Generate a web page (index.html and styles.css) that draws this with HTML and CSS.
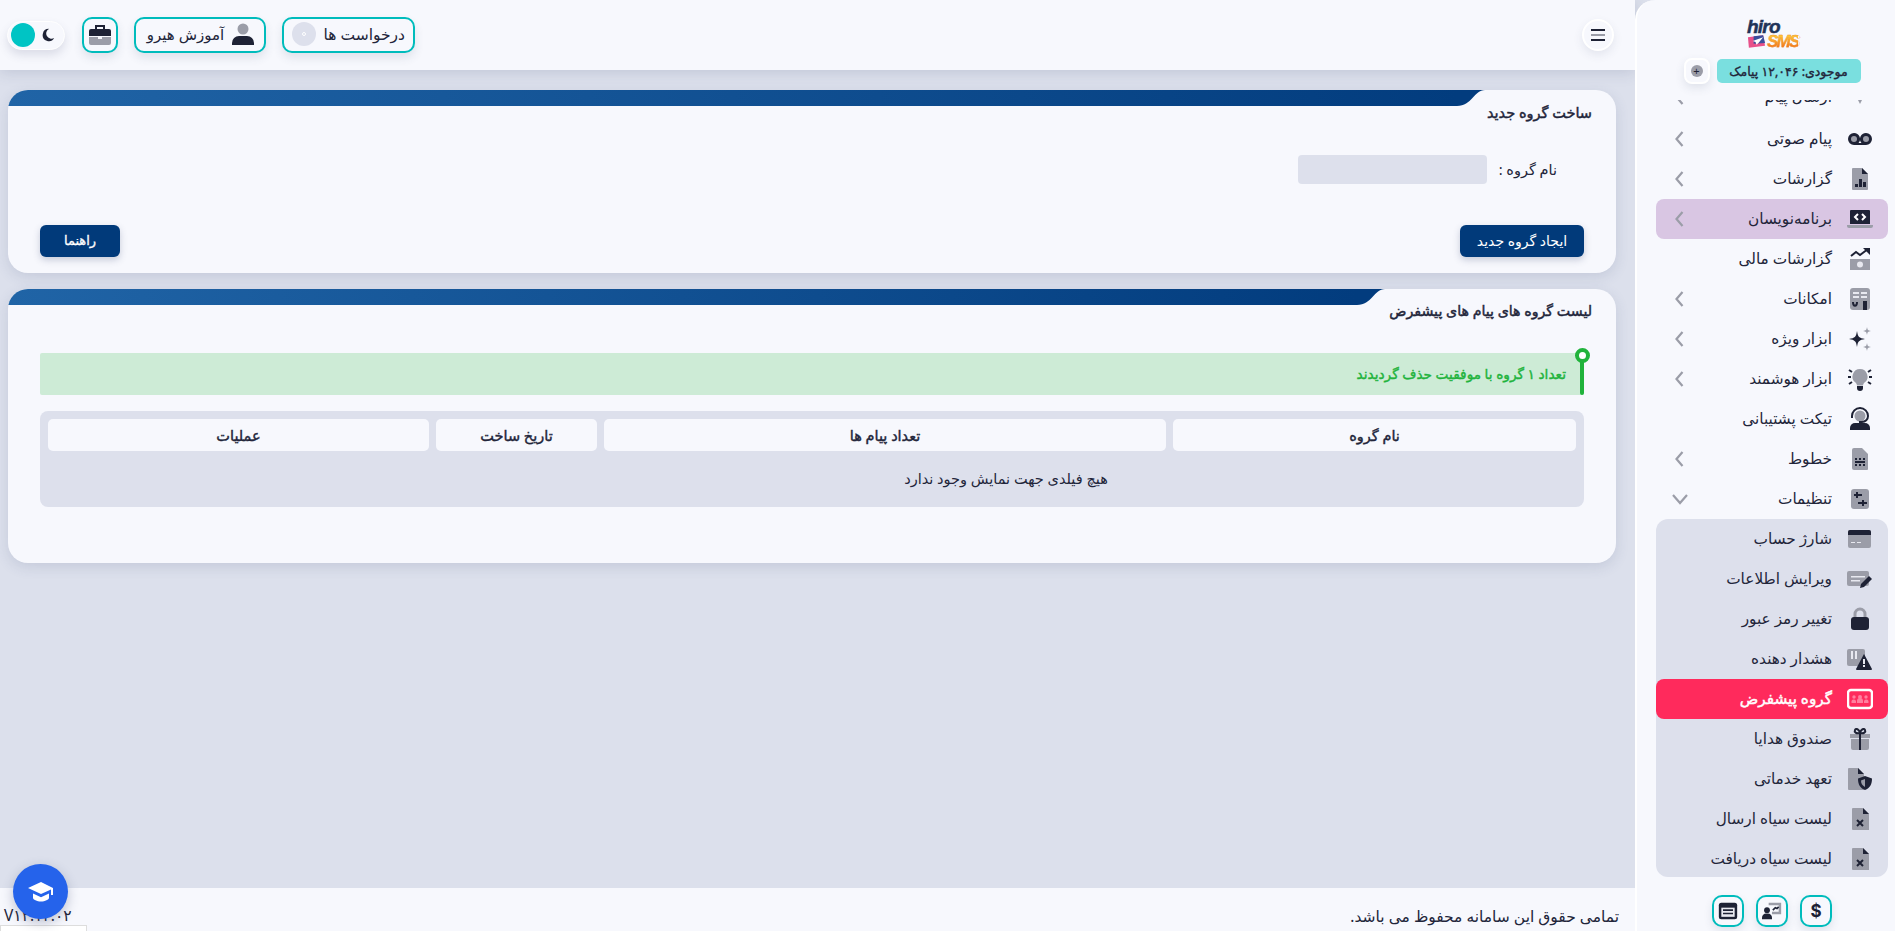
FILE: index.html
```html
<!DOCTYPE html>
<html lang="fa" dir="rtl">
<head>
<meta charset="utf-8">
<title>گروه پیشفرض</title>
<link rel="stylesheet" href="styles.css">
</head>
<body>
<aside class="sidebar">
  <div class="brand">
    <div class="logo" dir="ltr">
      <span class="logo-hiro">hiro</span>
      <div class="logo-row">
        <svg class="logo-plane" viewBox="0 0 20 14"><path fill="#e8508a" d="M1 3l16-2 2 11-17 2z"/><path fill="#3a4f9c" d="M7 2l10-1 2 8-12 1z"/><path fill="#fff" d="M17 3L6 7l3 1 1 3 2-2z"/></svg>
        <span class="logo-sms">SMS</span>
      </div>
    </div>
    <div class="balance-row">
      <span class="balance">موجودی: ۱۲,۰۴۶ پیامک</span>
      <button class="plus-btn"><span class="plus-dot">+</span></button>
    </div>
  </div>
  <nav class="nav">
    <a class="nav-item nav-first"><svg class="ico" viewBox="0 0 24 24"><path class="g" d="M2 2h20v13H14l-2 4-2-4H2z"/></svg><span>ارسال پیام</span><svg class="chev" viewBox="0 0 12 20"><path d="M9 3L3 10l6 7"/></svg></a>
    <a class="nav-item"><svg class="ico" viewBox="0 0 26 24"><path class="d" d="M7 6a6 6 0 0 0 0 12h12a6 6 0 0 0 0-12 6 6 0 0 0-4.500 10h-3A6 6 0 0 0 7 6z"/><circle class="g" cx="7" cy="12" r="3"/><circle class="g" cx="19" cy="12" r="3"/></svg><span>پیام صوتی</span><svg class="chev" viewBox="0 0 12 20"><path d="M9 3L3 10l6 7"/></svg></a>
    <a class="nav-item"><svg class="ico" viewBox="0 0 24 24"><path class="g" d="M5 1h9l6 6v15a1 1 0 0 1-1 1H5a1 1 0 0 1-1-1V2a1 1 0 0 1 1-1z"/><path class="d" d="M14 1l6 6h-6zM7 17h3v3H7zM11 12h3v8h-3zM15 15h3v5h-3z"/></svg><span>گزارشات</span><svg class="chev" viewBox="0 0 12 20"><path d="M9 3L3 10l6 7"/></svg></a>
    <a class="nav-item nav-dev"><svg class="ico" viewBox="0 0 26 24"><path class="d" d="M4 3h18a1 1 0 0 1 1 1v13H3V4a1 1 0 0 1 1-1z"/><path class="g" d="M0 18h26v1a2 2 0 0 1-2 2H2a2 2 0 0 1-2-2z"/><path class="w" d="M11 7l-3 3 3 3M15 7l3 3-3 3"/></svg><span>برنامه‌نویسان</span><svg class="chev" viewBox="0 0 12 20"><path d="M9 3L3 10l6 7"/></svg></a>
    <a class="nav-item"><svg class="ico" viewBox="0 0 24 24"><path class="g" d="M2 12h20v11H2z"/><circle class="pale" cx="12" cy="17.500" r="3"/><path class="dl" d="M3 9l5-4 4 3 8-6"/><path class="d" d="M15 1h7v7z"/></svg><span>گزارشات مالی</span></a>
    <a class="nav-item"><svg class="ico" viewBox="0 0 24 24"><rect class="g" x="2" y="1" width="20" height="22" rx="3"/><path class="pale" d="M5 5h6v2H5zM13 5h6v2h-6zM5 9h6v2H5zM13 9h6v2h-6z"/><path class="dl" d="M5 15c0 5 4 5 4 0"/><path class="d" d="M15 14h4v9h-4z"/></svg><span>امکانات</span><svg class="chev" viewBox="0 0 12 20"><path d="M9 3L3 10l6 7"/></svg></a>
    <a class="nav-item"><svg class="ico" viewBox="0 0 24 24"><path class="d" d="M9 4c1 6 2 7 8 8-6 1-7 2-8 8-1-6-2-7-8-8 6-1 7-2 8-8z"/><path class="g" d="M19 0c.5 3 1 3.500 4 4-3 .5-3.500 1-4 4-.5-3-1-3.500-4-4 3-.5 3.500-1 4-4zM19 16c.5 3 1 3.500 4 4-3 .5-3.500 1-4 4-.5-3-1-3.500-4-4 3-.5 3.500-1 4-4z"/></svg><span>ابزار ویژه</span><svg class="chev" viewBox="0 0 12 20"><path d="M9 3L3 10l6 7"/></svg></a>
    <a class="nav-item"><svg class="ico" viewBox="0 0 26 24"><path class="g" d="M13 2a7.500 7.500 0 0 0-4.500 13.500c1 1 1.500 2 1.500 3h6c0-1 .5-2 1.500-3A7.500 7.500 0 0 0 13 2z"/><path class="d" d="M10 19h6v2a3 3 0 0 1-6 0z"/><path class="dl" d="M1 10h3M22 10h3M2 3l3 2M24 3l-3 2M2 17l3-2M24 17l-3-2"/></svg><span>ابزار هوشمند</span><svg class="chev" viewBox="0 0 12 20"><path d="M9 3L3 10l6 7"/></svg></a>
    <a class="nav-item"><svg class="ico" viewBox="0 0 24 24"><circle class="g" cx="12" cy="9" r="5.500"/><path class="dl" d="M4 11V9a8 8 0 0 1 16 0 6 6 0 0 1-6 6h-3"/><path class="d" d="M7 16h10a5 5 0 0 1 5 5v2H2v-2a5 5 0 0 1 5-5z"/></svg><span>تیکت پشتیبانی</span></a>
    <a class="nav-item"><svg class="ico" viewBox="0 0 24 24"><path class="g" d="M6 1h8l6 6v15a1 1 0 0 1-1 1H6a2 2 0 0 1-2-2V3a2 2 0 0 1 2-2z"/><path class="d" d="M7 11h2v2H7zM11 11h2v2h-2zM15 11h2v2h-2zM7 14h10v2H7zM7 17h2v2H7zM11 17h2v2h-2zM15 17h2v2h-2z"/></svg><span>خطوط</span><svg class="chev" viewBox="0 0 12 20"><path d="M9 3L3 10l6 7"/></svg></a>
    <a class="nav-item"><svg class="ico" viewBox="0 0 24 24"><rect class="g" x="3" y="2" width="18" height="20" rx="3"/><path class="dl" d="M6 8h8M9 5v6M10 16h9M15 13v6"/></svg><span>تنظیمات</span><svg class="chev chev-down" viewBox="0 0 20 12"><path d="M3 2l7 8 7-8"/></svg></a>
    <div class="sub">
      <a class="nav-item"><svg class="ico" viewBox="0 0 26 24"><rect class="g" x="1" y="3" width="23" height="18" rx="2"/><path class="d" d="M1 5a2 2 0 0 1 2-2h19a2 2 0 0 1 2 2v3H1z"/><path class="pale" d="M4 15h4v1H4zM10 15h4v1h-4z"/></svg><span>شارژ حساب</span></a>
      <a class="nav-item"><svg class="ico" viewBox="0 0 26 24"><rect class="g" x="0" y="4" width="22" height="15" rx="2"/><path class="pale" d="M4 9h14v1.500H4zM4 13h9v1.500H4z"/><path class="d" d="M22 9l3 3-8 8-4 1 1-4z"/></svg><span>ویرایش اطلاعات</span></a>
      <a class="nav-item"><svg class="ico" viewBox="0 0 24 24"><path class="gl" d="M7 11V7a5 5 0 0 1 10 0v4"/><rect class="d" x="3" y="10" width="18" height="13" rx="3"/></svg><span>تغییر رمز عبور</span></a>
      <a class="nav-item"><svg class="ico" viewBox="0 0 26 24"><rect class="g" x="0" y="2" width="18" height="17" rx="2"/><path class="pale" d="M4 4h2v8H4zM8 4h2v8H8z"/><path class="d" d="M17 7l8 15a1 1 0 0 1-1 1H10a1 1 0 0 1-1-1z"/><path class="pale" d="M16 12h2v5h-2zM16 18h2v2h-2z"/></svg><span>هشدار دهنده</span></a>
      <a class="nav-item nav-active"><svg class="ico" viewBox="0 0 26 24"><rect class="wl" x="1" y="3" width="24" height="18" rx="3"/><path class="pink" d="M10 14a3 3 0 0 1 6 0v2h-6zM4.500 14a2.500 2.500 0 0 1 4.500 0v2H4.500zM17 14a2.500 2.500 0 0 1 4.500 0v2H17z"/><circle class="pink" cx="13" cy="10" r="2"/><circle class="pink" cx="7" cy="10" r="1.700"/><circle class="pink" cx="19" cy="10" r="1.700"/></svg><span>گروه پیشفرض</span></a>
      <a class="nav-item"><svg class="ico" viewBox="0 0 24 24"><path class="g" d="M2 7h20v4H2zM3 12h18v9a2 2 0 0 1-2 2H5a2 2 0 0 1-2-2z"/><path class="d" d="M11 7h2v16h-2z"/><path class="dl" d="M12 6C8 7 6 5 7 3s4-1 5 3c1-4 4-5 5-3s-1 4-5 3z"/></svg><span>صندوق هدایا</span></a>
      <a class="nav-item"><svg class="ico" viewBox="0 0 26 24"><path class="g" d="M2 1h9l6 6v15a1 1 0 0 1-1 1H2a1 1 0 0 1-1-1V2a1 1 0 0 1 1-1z"/><path class="d" d="M11 1l6 6h-6zM18 9l7 2.500c0 6-2 9.500-7 11.500-5-2-7-5.500-7-11.500z"/><path class="g" d="M18 12v8c-2.500-1.500-4-3-4-6.500z"/></svg><span>تعهد خدماتی</span></a>
      <a class="nav-item"><svg class="ico" viewBox="0 0 24 24"><path class="g" d="M5 1h10l6 6v16H5a1 1 0 0 1-1-1V2a1 1 0 0 1 1-1z"/><path class="d" d="M15 1l6 6h-6z"/><path class="dl" d="M9 13l6 6M15 13l-6 6"/></svg><span>لیست سیاه ارسال</span></a>
      <a class="nav-item"><svg class="ico" viewBox="0 0 24 24"><path class="g" d="M5 1h10l6 6v16H5a1 1 0 0 1-1-1V2a1 1 0 0 1 1-1z"/><path class="d" d="M15 1l6 6h-6z"/><path class="dl" d="M9 13l6 6M15 13l-6 6"/></svg><span>لیست سیاه دریافت</span></a>
    </div>
  </nav>
  <div class="side-foot">
    <button class="tool-btn tool-dollar">$</button>
    <button class="tool-btn"><svg class="ico-sm" viewBox="0 0 24 24"><path class="g" d="M8 2h15v14H12v-3h8V5H8z"/><path class="dl" d="M13 11l3-3 2 1 2-2"/><circle class="d" cx="6" cy="11" r="3.500"/><path class="d" d="M0 22v-2a5 5 0 0 1 5-5h2a5 5 0 0 1 5 5v2z"/></svg></button>
    <button class="tool-btn"><svg class="ico-sm" viewBox="0 0 24 24"><rect class="d" x="1" y="2" width="22" height="20" rx="3"/><path class="pale" d="M4 8h16v11H4z"/><path class="dl" d="M6 11h12M6 15h12"/></svg></button>
  </div>
</aside>

<div class="main">
  <header class="topbar">
    <button class="menu-btn"><span class="ml ml-d"></span><span class="ml ml-g"></span><span class="ml ml-d"></span></button>
    <div class="top-actions">
      <button class="top-btn">درخواست ها<span class="disc"><span class="disc-hole"></span></span></button>
      <button class="top-btn top-edu"><svg class="ico" viewBox="0 0 24 24"><circle class="g" cx="12" cy="7" r="5.500"/><path class="d" d="M8 14h8a7 7 0 0 1 7 7v2H1v-2a7 7 0 0 1 7-7z"/></svg>آموزش هیرو</button>
      <button class="top-btn top-square"><svg class="ico" viewBox="0 0 24 24"><path class="dl" d="M8 6V3h8v3"/><path class="d" d="M3 6h18a2 2 0 0 1 2 2v5H1V8a2 2 0 0 1 2-2z"/><path class="g" d="M1 14h9v2h4v-2h9v6a2 2 0 0 1-2 2H3a2 2 0 0 1-2-2z"/></svg></button>
      <div class="toggle">
        <svg class="moon" viewBox="0 0 16 16"><path class="d" d="M9 1a7 7 0 1 0 6 10.500A6 6 0 0 1 9 1z"/></svg>
        <span class="knob"></span>
      </div>
    </div>
  </header>

  <main class="content">
    <section class="card">
      <div class="band"><svg class="band-end" viewBox="0 0 28 16" preserveAspectRatio="none"><path d="M28 0H0v16C15 16 17 0 28 0z"/></svg><span class="band-fill"></span></div>
      <h2 class="card-title">ساخت گروه جدید</h2>
      <div class="field-row">
        <label class="field-label">نام گروه :</label>
        <input class="field-input" type="text">
      </div>
      <div class="actions">
        <button class="primary">ایجاد گروه جدید</button>
        <button class="primary primary-help">راهنما</button>
      </div>
    </section>

    <section class="card card-list">
      <div class="band band-long"><svg class="band-end" viewBox="0 0 28 16" preserveAspectRatio="none"><path d="M28 0H0v16C15 16 17 0 28 0z"/></svg><span class="band-fill"></span></div>
      <h2 class="card-title">لیست گروه های پیام های پیشفرض</h2>
      <div class="alert">تعداد ۱ گروه با موفقیت حذف گردیدند</div>
      <div class="table-wrap">
        <table class="table">
          <colgroup><col class="c1"><col class="c2"><col class="c3"><col class="c4"></colgroup>
          <thead><tr><th>نام گروه</th><th>تعداد پیام ها</th><th>تاریخ ساخت</th><th>عملیات</th></tr></thead>
          <tbody><tr><td colspan="3">هیچ فیلدی جهت نمایش وجود ندارد</td><td></td></tr></tbody>
        </table>
      </div>
    </section>
  </main>

  <footer class="footer">
    <span class="copy">تمامی حقوق این سامانه محفوظ می باشد.</span>
    <div class="ver-box">
      <span class="version" dir="ltr">V۱۲.۱۲.۰۲</span>
      <span class="ver-field"></span>
    </div>
  </footer>
</div>

<button class="fab"><svg viewBox="0 0 28 24"><path fill="#fff" d="M14 2L1 8l13 6 10-4.600V15h2V8z"/><path fill="#fff" d="M6 13.500V18c0 1.500 4 3.500 8 3.500s8-2 8-3.500v-4.500l-8 3.700z"/></svg></button>
</body>
</html>
```
FILE: styles.css
```css
* { box-sizing: border-box; }
html, body { height: 100%; }
body {
  margin: 0;
  display: flex;
  height: 931px;
  overflow: hidden;
  background: #dce0ec;
  color: #22253a;
  font-family: "Noto Sans", "DejaVu Sans", sans-serif;
  font-size: 15px;
}
button { font-family: inherit; cursor: pointer; }

.g { fill: #9b9da8; }
.d { fill: #1e2235; }
.pale { fill: #e8e9f0; }
.pink { fill: #ff7f9e; }
.dl { fill: none; stroke: #1e2235; stroke-width: 2; }
.gl { fill: none; stroke: #9b9da8; stroke-width: 3; }
.w { fill: none; stroke: #fff; stroke-width: 2; }
.wl { fill: none; stroke: #fff; stroke-width: 2.5; }

/* sidebar */
.sidebar {
  width: 260px;
  flex: none;
  display: flex;
  flex-direction: column;
  height: 931px;
  background: #f7f8fd;
  border-left: 2px solid #fff;
  border-top-left-radius: 20px;
  position: relative;
  z-index: 2;
}
.brand { height: 100px; flex: none; display: flex; flex-direction: column; align-items: center; padding: 20px 0 0 12px; }
.logo { width: 50px; height: 28px; font-family: "Liberation Sans", sans-serif; font-weight: 700; font-style: italic; line-height: 1; }
.logo-hiro { display: block; height: 14px; font-size: 19px; line-height: 13px; letter-spacing: -.8px; color: #1f3358; -webkit-text-stroke: .5px #1f3358; }
.logo-row { display: flex; align-items: center; gap: 1px; }
.logo-plane { width: 19px; height: 14px; flex: none; }
.logo-sms { font-size: 17px; line-height: 13px; letter-spacing: -1.8px; background: linear-gradient(#ffcf3c, #f0701c); -webkit-background-clip: text; background-clip: text; color: transparent; -webkit-text-stroke: .3px #f08a1c; }
.balance-row { display: flex; align-items: center; gap: 7px; margin-top: 10px; }
.balance { width: 144px; height: 24px; background: #7adfdf; border-radius: 5px; display: flex; align-items: center; justify-content: center; font-size: 12.5px; -webkit-text-stroke: .35px currentColor; white-space: nowrap; }
.plus-btn { width: 26px; height: 26px; padding: 0; border: 2px solid #fff; border-radius: 8px; background: #f7f8fd; box-shadow: 0 4px 10px rgba(60,70,110,.12); display: flex; align-items: center; justify-content: center; }
.plus-dot { width: 12px; height: 12px; border-radius: 50%; background: #9b9da8; color: #1e2235; font-size: 11px; line-height: 11px; text-align: center; }

.nav { flex: 1; min-height: 0; overflow: hidden; padding: 0 7px 0 19px; }
.nav-item { display: flex; align-items: center; height: 40px; padding: 0 15px 0 17px; gap: 15px; border-radius: 8px; font-size: 15.3px; color: #22253a; white-space: nowrap; }
.nav-item span { padding-bottom: 2px; }
.nav-first { margin: -23px 0 2px; }
.nav-dev { background: #d9c6e3; }
.ico { width: 26px; height: 24px; flex: none; }
.chev { width: 13px; height: 20px; margin-inline-start: auto; fill: none; stroke: #9b9da8; stroke-width: 2.2; flex: none; }
.chev-down { width: 20px; height: 12px; margin-left: -3px; }
.sub { background: #dde0ec; border-radius: 12px; height: 358px; margin-top: 1px; }
.sub .nav-item:first-child { margin-top: -1px; }
.nav-active { background: #ff2a5c; color: #fff; -webkit-text-stroke: .45px currentColor; }

.side-foot { height: 46px; flex: none; display: flex; justify-content: center; gap: 12px; padding: 10px 0 0 12px; }
.tool-btn { width: 32px; height: 32px; padding: 0; background: #f7f8fd; border: 2px solid #00bcbc; border-radius: 10px; box-shadow: 0 4px 8px rgba(60,70,110,.12); display: flex; align-items: center; justify-content: center; }
.tool-dollar { color: #1e2235; font-size: 17px; font-weight: 700; font-family: "Inter", sans-serif; }
.ico-sm { width: 20px; height: 20px; }

/* main */
.main { flex: 1; min-width: 0; display: flex; flex-direction: column; }
.topbar { height: 70px; flex: none; display: flex; align-items: center; justify-content: space-between; padding: 0 21px 0 7px; background: #f7f8fd; box-shadow: 0 2px 14px rgba(60,70,110,.18); position: relative; }
.menu-btn { width: 32px; height: 32px; padding: 0; border: 2px solid #fff; border-radius: 50%; background: #f7f8fd; box-shadow: 0 4px 10px rgba(60,70,110,.1); display: flex; flex-direction: column; align-items: center; justify-content: center; gap: 3px; }
.ml { width: 14px; height: 2px; display: block; }
.ml-d { background: #1e2235; }
.ml-g { background: #9b9da8; }
.top-actions { display: flex; align-items: center; gap: 16px; }
.top-btn { height: 36px; width: 133px; padding: 0 8px 2px; display: flex; align-items: center; justify-content: space-between; background: #f7f8fd; border: 2px solid #00bcbc; border-radius: 10px; box-shadow: 0 5px 10px rgba(60,70,110,.12); color: #22253a; font-size: 15.5px; white-space: nowrap; }
.top-edu { width: 132px; padding-left: 11px; justify-content: center; gap: 6px; font-size: 15px; }
.top-square { width: 36px; padding: 0; justify-content: center; }
.disc { width: 24px; height: 24px; border-radius: 50%; background: #dde0ec; display: flex; align-items: center; justify-content: center; }
.disc-hole { width: 4px; height: 4px; border-radius: 50%; border: 1px solid #fff; }
.toggle { width: 58px; height: 29px; padding: 0 9px 0 3px; display: flex; align-items: center; justify-content: space-between; background: #f7f8fd; border: 1px solid #fff; border-radius: 15px; box-shadow: 0 5px 10px rgba(60,70,110,.15); margin-right: 1px; }
.moon { width: 14px; height: 14px; }
.knob { width: 24px; height: 24px; border-radius: 50%; background: #00c4c4; }

.content { flex: 1; padding: 20px 19px 0 8px; display: flex; flex-direction: column; gap: 16px; }
.card { position: relative; background: #f7f8fd; border-radius: 20px; height: 183px; padding: 10px 24px 16px; overflow: hidden; box-shadow: 0 4px 14px rgba(60,70,110,.14); flex: none; }
.card-list { height: 274px; }
.band { position: absolute; top: 0; left: 0; right: 131px; height: 16px; display: flex; }
.band-long { right: 231px; }
.band-fill { flex: 1; background: linear-gradient(to left, #023c7e, #2064a6); }
.band-end { width: 28px; height: 16px; flex: none; fill: #023c7e; }
.card-title { margin: 0; font-size: 14.5px; line-height: 24px; font-weight: 400; -webkit-text-stroke: .45px currentColor; color: #22253a; }
.card-list .card-title { font-size: 14.2px; }
.field-row { display: flex; align-items: center; margin: 31px 35px 0 0; }
.field-label { width: 70px; font-size: 14.5px; padding-bottom: 2px; }
.field-input { width: 189px; height: 29px; border: 0; border-radius: 4px; background: #dde0ec; }
.actions { display: flex; justify-content: space-between; margin: 41px 8px 0; }
.primary { width: 124px; height: 32px; border: 0; border-radius: 6px; background: #013a7a; color: #fff; font-size: 14px; padding: 0 0 2px; box-shadow: 0 3px 7px rgba(60,70,110,.25); }
.primary-help { width: 80px; font-size: 13px; -webkit-text-stroke: .3px currentColor; }
.alert { position: relative; height: 42px; margin: 30px 8px 0; padding: 0 18px 2px 0; display: flex; align-items: center; background: #cdebd6; color: #21b33c; font-size: 13.7px; -webkit-text-stroke: .4px currentColor; border-radius: 2px; }
.alert::before { content: ""; position: absolute; top: 0; bottom: 0; right: 0; width: 4px; background: #21b33c; border-radius: 0 0 2px 2px; }
.alert::after { content: ""; position: absolute; top: -5px; right: -5.500px; width: 7px; height: 7px; border: 4px solid #21b33c; border-radius: 50%; background: #fff; }
.table-wrap { margin: 16px 8px 0; padding: 1px; background: #dde0ec; border-radius: 8px; }
.table { width: 100%; border-collapse: separate; border-spacing: 7px; table-layout: fixed; }
.c1 { width: 403px; }
.c2 { width: 562px; }
.c3 { width: 161px; }
.c4 { width: 381px; }
.table th { height: 32px; padding: 0; background: #f7f8fd; border-radius: 5px; font-size: 14.5px; font-weight: 400; -webkit-text-stroke: .4px currentColor; }
.table td { height: 41px; padding: 0 0 2px; text-align: center; font-size: 14.5px; }

.footer { height: 43px; flex: none; display: flex; align-items: flex-start; justify-content: space-between; padding: 17px 16px 0 0; background: #f7f8fd; overflow: hidden; position: relative; }
.copy { font-size: 15.5px; line-height: 22px; }
.ver-box { width: 87px; display: flex; flex-direction: column; direction: ltr; }
.version { padding-left: 4px; font-size: 15.5px; line-height: 20px; white-space: nowrap; }
.ver-field { height: 20px; background: #fff; border: 1px solid #ddd; }
.fab { position: fixed; left: 13px; bottom: 12px; width: 55px; height: 55px; padding: 0; border: 0; border-radius: 50%; background: #2563eb; box-shadow: 0 4px 12px rgba(60,70,110,.3); display: flex; align-items: center; justify-content: center; }
.fab svg { width: 28px; height: 24px; }
```
